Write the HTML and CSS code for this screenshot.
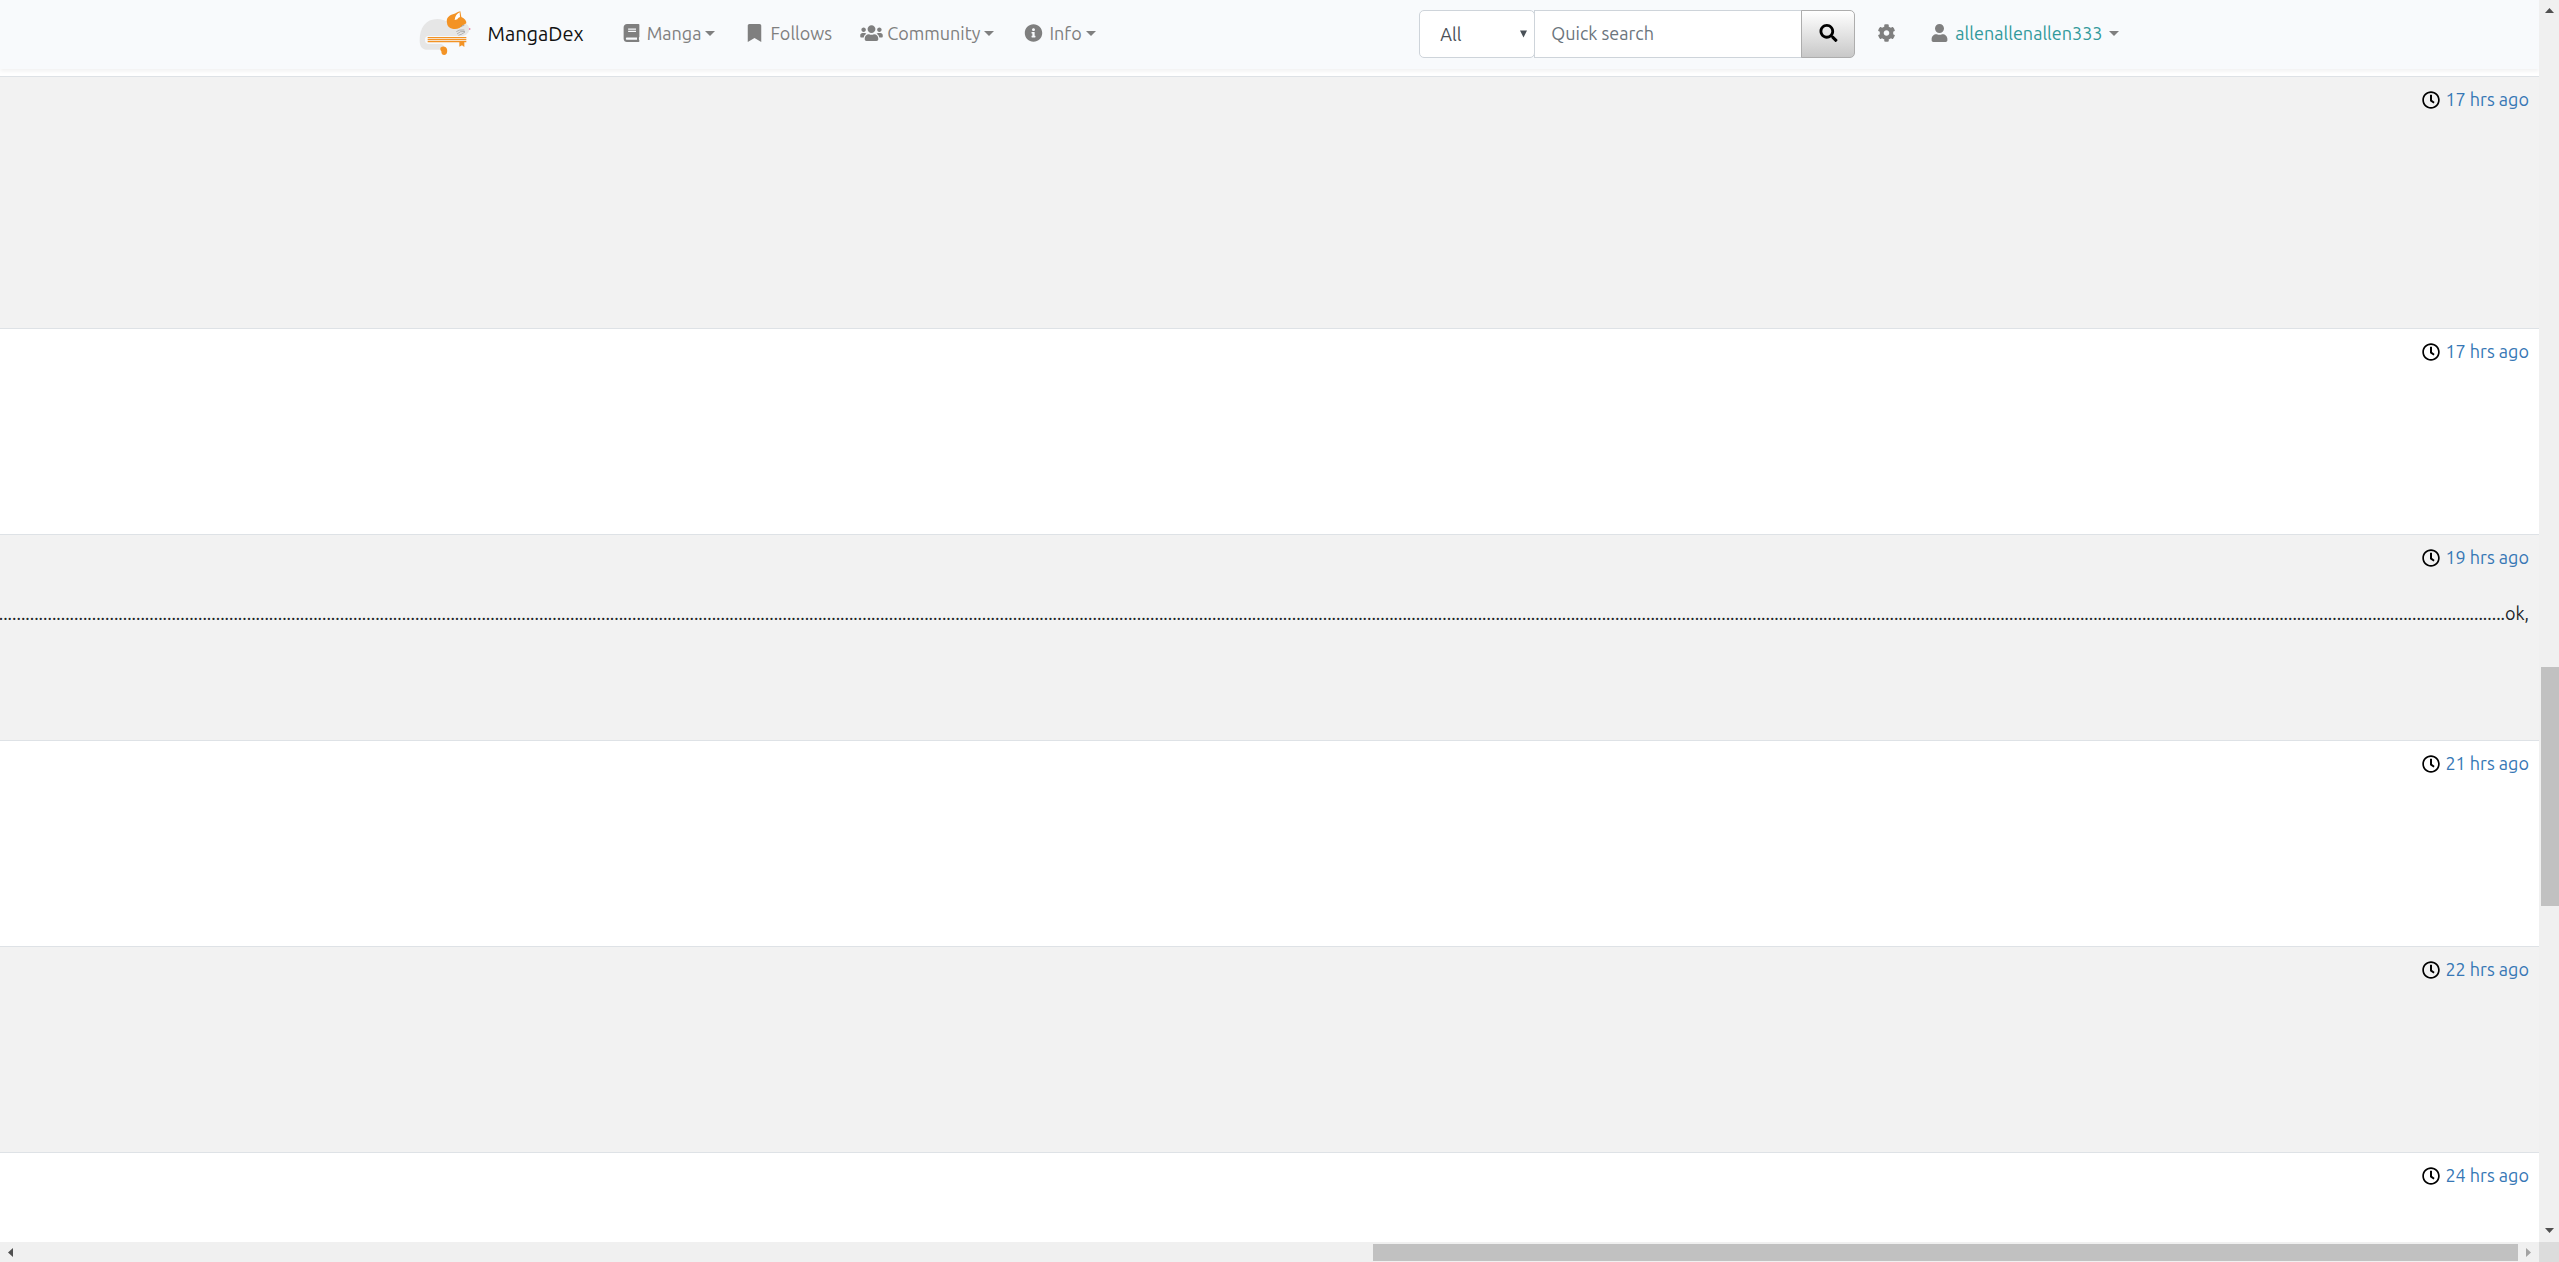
FILE: index.html
```html
<!DOCTYPE html>
<html lang="en">
<head>
  <meta charset="UTF-8">
  <meta name="viewport" content="width=device-width, initial-scale=1.0">
  <title>MangaDex</title>
  <link rel="stylesheet" href="styles.css">
</head>
<body>
  <div class="window">
    <div class="view">
      <!-- Top navigation -->
      <nav class="navbar">
        <div class="container">
          <a class="brand" href="#">
            <svg class="logo" viewBox="0 0 156 132" aria-hidden="true">
              <path fill="#e6e6e6" d="M20 116C7 114 2 104 2 88C2 50 20 24 55 24C68 24 78 28 88 34L130 34C144 38 151 46 151 54C151 64 143 72 133 75L28 76Q19 78 19 86Q19 96 28 98L64 98C76 101 78 108 72 116Z"/>
              <path fill="#f7f9fb" d="M26 75H142V98H26Q18 96 18 87Q18 77 26 75Z"/>
              <path fill="#f39325" d="M26 78H142V82H26ZM26 84H142V88H26ZM26 90H142V94H26ZM121 92H136V108L129 103L121 107Z"/>
              <path fill="#f39325" d="M64 110C72 104 82 106 84 115C86 124 83 132 76 132C69 132 67 128 67 121Q63 117 64 110Z"/>
              <path fill="#f39325" d="M84 36C81 23 88 14 102 10C112 7 116 2 124 1L127 18C137 22 143 29 142 37C138 38 136 42 131 43C125 52 112 56 100 53C91 51 84 45 84 36Z"/>
              <path fill="#fff" d="M107 27C108 15 114 8 122 4L123 18Q116 20 115 25Z"/>
              <path fill="none" stroke="#777" stroke-width="1.5" d="M112 62Q120 55 136 57M114 69Q122 60 138 61M118 73Q128 71 138 63M126 46L136 43"/>
              <circle cx="152" cy="54" r="2.5" fill="#e75a8c"/>
            </svg>
            MangaDex
          </a>
          <ul class="menu main-menu">
            <li>
              <a class="nav-link" href="#">
                <svg class="icon" viewBox="0 0 448 512" aria-hidden="true"><path d="M448 360V24c0-13.300-10.700-24-24-24H96C43 0 0 43 0 96v320c0 53 43 96 96 96h328c13.300 0 24-10.700 24-24v-16c0-7.500-3.500-14.300-8.900-18.700-4.200-15.400-4.200-59.300 0-74.700 5.400-4.300 8.900-11.100 8.900-18.600zM128 134c0-3.300 2.700-6 6-6h212c3.300 0 6 2.700 6 6v20c0 3.300-2.700 6-6 6H134c-3.300 0-6-2.700-6-6v-20zm0 64c0-3.300 2.700-6 6-6h212c3.300 0 6 2.700 6 6v20c0 3.300-2.700 6-6 6H134c-3.300 0-6-2.700-6-6v-20zm253.400 250H96c-17.700 0-32-14.300-32-32 0-17.600 14.400-32 32-32h285.400c-1.900 17.100-1.900 46.900 0 64z"/></svg>
                Manga
                <span class="caret"></span>
              </a>
            </li>
            <li>
              <a class="nav-link" href="#">
                <svg class="icon" viewBox="0 0 384 512" aria-hidden="true"><path d="M0 512V48C0 21.490 21.490 0 48 0h288c26.510 0 48 21.490 48 48v464L192 400 0 512z"/></svg>
                Follows
              </a>
            </li>
            <li>
              <a class="nav-link" href="#">
                <svg class="icon" viewBox="0 0 640 512" aria-hidden="true"><path d="M96 224c35.300 0 64-28.700 64-64s-28.700-64-64-64-64 28.700-64 64 28.700 64 64 64zm448 0c35.300 0 64-28.700 64-64s-28.700-64-64-64-64 28.700-64 64 28.700 64 64 64zm32 32h-64c-17.600 0-33.500 7.100-45.100 18.600 40.300 22.100 68.900 62 75.100 109.400h66c17.700 0 32-14.300 32-32v-32c0-35.300-28.700-64-64-64zm-256 0c61.900 0 112-50.100 112-112S381.900 32 320 32 208 82.100 208 144s50.100 112 112 112zm76.800 32h-8.300c-20.800 10-43.900 16-68.500 16s-47.600-6-68.500-16h-8.300C179.600 288 128 339.600 128 403.200V432c0 26.500 21.500 48 48 48h288c26.500 0 48-21.500 48-48v-28.800c0-63.600-51.600-115.200-115.200-115.200zm-223.700-13.400C161.500 263.100 145.600 256 128 256H64c-35.300 0-64 28.700-64 64v32c0 17.700 14.300 32 32 32h65.900c6.300-47.400 34.900-87.300 75.200-109.400z"/></svg>
                Community
                <span class="caret"></span>
              </a>
            </li>
            <li>
              <a class="nav-link" href="#">
                <svg class="icon" viewBox="0 0 512 512" aria-hidden="true"><path d="M256 8C119 8 8 119 8 256c0 137 111 248 248 248s248-111 248-248C504 119 393 8 256 8zm0 110c23.200 0 42 18.800 42 42s-18.800 42-42 42-42-18.800-42-42 18.800-42 42-42zm56 254c0 6.600-5.400 12-12 12h-88c-6.600 0-12-5.400-12-12v-24c0-6.600 5.400-12 12-12h12v-64h-12c-6.600 0-12-5.400-12-12v-24c0-6.600 5.400-12 12-12h64c6.600 0 12 5.400 12 12v100h12c6.600 0 12 5.400 12 12v24z"/></svg>
                Info
                <span class="caret"></span>
              </a>
            </li>
          </ul>

          <form class="search">
            <div class="select-wrap">
              <select class="search-type" aria-label="Search type">
                <option>All</option>
              </select>
              <svg class="select-arrow" viewBox="0 0 8 8" aria-hidden="true"><path d="M0 0H8L4 8Z"/></svg>
            </div>
            <input class="search-input" type="text" placeholder="Quick search" aria-label="Quick search">
            <button class="search-btn" type="submit" aria-label="Search">
              <svg class="icon" viewBox="0 0 512 512" aria-hidden="true"><path d="M505 442.700L405.300 343c-4.500-4.500-10.600-7-17-7H372c27.600-35.300 44-79.700 44-128C416 93.100 322.900 0 208 0S0 93.100 0 208s93.100 208 208 208c48.300 0 92.700-16.400 128-44v16.300c0 6.400 2.500 12.500 7 17l99.700 99.700c9.400 9.400 24.600 9.400 33.900 0l28.300-28.300c9.400-9.400 9.400-24.600.1-34zM208 336c-70.700 0-128-57.200-128-128 0-70.700 57.200-128 128-128 70.700 0 128 57.200 128 128 0 70.700-57.200 128-128 128z"/></svg>
            </button>
          </form>

          <ul class="menu user-menu">
            <li>
              <a class="nav-link" href="#" aria-label="Settings">
                <svg class="icon" viewBox="0 0 512 512" aria-hidden="true"><path d="M487.400 315.700l-42.600-24.600c4.300-23.200 4.300-47 0-70.200l42.600-24.600c4.900-2.800 7.100-8.600 5.500-14-11.100-35.600-30-67.800-54.700-94.600-3.800-4.100-10-5.100-14.800-2.300L380.800 110c-17.900-15.400-38.500-27.300-60.800-35.100V25.800c0-5.600-3.900-10.500-9.400-11.700-36.700-8.200-74.300-7.800-109.200 0-5.500 1.200-9.400 6.100-9.400 11.700V75c-22.200 7.900-42.800 19.800-60.800 35.100L88.700 85.500c-4.900-2.800-11-1.900-14.800 2.300-24.700 26.700-43.600 58.900-54.700 94.600-1.700 5.400.6 11.200 5.500 14L67.300 221c-4.300 23.200-4.300 47 0 70.200l-42.600 24.600c-4.900 2.800-7.100 8.600-5.500 14 11.100 35.600 30 67.800 54.700 94.600 3.800 4.100 10 5.100 14.800 2.300l42.600-24.600c17.900 15.400 38.500 27.300 60.800 35.100v49.200c0 5.600 3.900 10.500 9.400 11.700 36.700 8.200 74.300 7.800 109.200 0 5.500-1.200 9.400-6.100 9.400-11.700v-49.200c22.200-7.900 42.800-19.800 60.800-35.100l42.600 24.600c4.900 2.800 11 1.900 14.800-2.300 24.700-26.700 43.600-58.900 54.700-94.600 1.500-5.500-.7-11.300-5.600-14.100zM256 336c-44.100 0-80-35.900-80-80s35.900-80 80-80 80 35.900 80 80-35.900 80-80 80z"/></svg>
              </a>
            </li>
            <li>
              <a class="nav-link" href="#">
                <svg class="icon" viewBox="0 0 448 512" aria-hidden="true"><path d="M224 256c70.700 0 128-57.300 128-128S294.700 0 224 0 96 57.300 96 128s57.300 128 128 128zm89.600 32h-16.700c-22.200 10.200-46.900 16-72.900 16s-50.600-5.800-72.900-16h-16.700C60.200 288 0 348.200 0 422.400V464c0 26.500 21.500 48 48 48h352c26.500 0 48-21.500 48-48v-41.600c0-74.200-60.200-134.400-134.400-134.400z"/></svg>
                <span class="username">allenallenallen333</span>
                <span class="caret"></span>
              </a>
            </li>
          </ul>
        </div>
      </nav>

      <!-- Comments -->
      <main class="posts">
        <article class="post post-tall">
          <div class="post-time">
            <svg class="clock" viewBox="0 0 512 512" aria-hidden="true"><use href="#clock"/></svg>
            <a href="#">17 hrs ago</a>
          </div>
        </article>
        <article class="post">
          <div class="post-time">
            <svg class="clock" viewBox="0 0 512 512" aria-hidden="true"><use href="#clock"/></svg>
            <a href="#">17 hrs ago</a>
          </div>
        </article>
        <article class="post">
          <div class="post-time">
            <svg class="clock" viewBox="0 0 512 512" aria-hidden="true"><use href="#clock"/></svg>
            <a href="#">19 hrs ago</a>
          </div>
          <p class="post-body" id="longPost">ok,</p>
        </article>
        <article class="post">
          <div class="post-time">
            <svg class="clock" viewBox="0 0 512 512" aria-hidden="true"><use href="#clock"/></svg>
            <a href="#">21 hrs ago</a>
          </div>
        </article>
        <article class="post">
          <div class="post-time">
            <svg class="clock" viewBox="0 0 512 512" aria-hidden="true"><use href="#clock"/></svg>
            <a href="#">22 hrs ago</a>
          </div>
        </article>
        <article class="post">
          <div class="post-time">
            <svg class="clock" viewBox="0 0 512 512" aria-hidden="true"><use href="#clock"/></svg>
            <a href="#">24 hrs ago</a>
          </div>
        </article>
      </main>
    </div>

    <!-- Scrollbars -->
    <div class="scroll-y">
      <svg class="arrow" viewBox="0 0 20 20" aria-hidden="true"><path d="M6 13L10.500 8L15 13Z"/></svg>
      <div class="thumb"></div>
      <svg class="arrow arrow-end" viewBox="0 0 20 20" aria-hidden="true"><path d="M6 6L10.500 11L15 6Z"/></svg>
    </div>
    <div class="scroll-x">
      <svg class="arrow" viewBox="0 0 20 20" aria-hidden="true"><path d="M13 6L8 10.500L13 15Z"/></svg>
      <div class="thumb"></div>
      <svg class="arrow arrow-end arrow-off" viewBox="0 0 20 20" aria-hidden="true"><path d="M7 6L12 10.500L7 15Z"/></svg>
    </div>
    <div class="scroll-corner"></div>
  </div>

  <svg class="symbols" aria-hidden="true">
    <symbol id="clock" viewBox="0 0 512 512"><path d="M256 8C119 8 8 119 8 256s111 248 248 248 248-111 248-248S393 8 256 8zm0 448c-110.500 0-200-89.500-200-200S145.500 56 256 56s200 89.500 200 200-89.500 200-200 200zm61.800-104.400l-84.900-61.700c-3.100-2.300-4.900-5.900-4.900-9.700V116c0-6.600 5.400-12 12-12h32c6.600 0 12 5.400 12 12v141.700l66.800 48.600c5.400 3.900 6.500 11.400 2.600 16.800L334.600 349c-3.900 5.300-11.400 6.500-16.800 2.600z"/></symbol>
  </svg>

  <script>
    // One unbroken line of dots, it runs off the left edge
    const longPost = document.getElementById('longPost');
    longPost.textContent = '.'.repeat(640) + longPost.textContent;
  </script>
</body>
</html>
```

FILE: styles.css
```css
* {
  box-sizing: border-box;
}
body {
  margin: 0;
  font-family: Ubuntu, "Open Sans", sans-serif;
  font-size: 18px;
  line-height: 27px;
  color: #212529;
  background-color: #fff;
}
a {
  color: #3677b5;
  text-decoration: none;
}
.symbols {
  display: none;
}

/* Window: page view plus the two scrollbars */
.window {
  display: grid;
  grid-template-columns: minmax(0, 1fr) 20px;
  grid-template-rows: minmax(0, 1fr) 20px;
  height: 100vh;
}
.view {
  overflow: hidden;
}

/* Navbar */
.navbar {
  position: relative;
  padding: 10px 0 11px;
  background-color: #f8fafc;
  box-shadow: 0 2px 4px rgba(0, 0, 0, 0.06);
}
.container {
  display: flex;
  align-items: center;
  max-width: 1702px;
  margin: 0 auto;
  padding-right: 2px;
}
.brand {
  display: flex;
  align-items: center;
  gap: 17px;
  margin-right: 36px;
  font-size: 20px;
  color: #111;
}
.menu {
  display: flex;
  gap: 30px;
  margin: 0;
  padding: 0;
  list-style: none;
}
.main-menu {
  gap: 28px;
}
.brand,
.menu {
  margin-bottom: 2px;
}
.logo {
  width: 52px;
  height: 44px;
}
.nav-link {
  display: flex;
  align-items: center;
  gap: 4px;
  min-height: 27px;
  color: #7f7f7f;
}
.nav-link:hover {
  color: #4c4c4c;
}
.icon {
  width: 23px;
  height: 18px;
  fill: currentColor;
}
.username {
  color: #31999b;
}
.caret {
  border-top: 5px solid;
  border-left: 5px solid transparent;
  border-right: 5px solid transparent;
}
.username + .caret {
  margin-left: 2px;
}
.user-menu {
  margin-left: 20px;
}

/* Search box */
.search {
  display: flex;
  margin: 0 0 0 auto;
}
.select-wrap {
  position: relative;
}
.search-type,
.search-input,
.search-btn {
  height: 48px;
  margin: 0;
  font-family: inherit;
  font-size: 18px;
  border: 1px solid #ced4da;
}
.search-type {
  width: 116px;
  padding: 0 20px;
  color: #495057;
  background-color: #fff;
  border-radius: 5px;
  appearance: none;
}
.select-arrow {
  position: absolute;
  top: 20px;
  right: 8px;
  width: 7px;
  height: 8px;
  fill: #495057;
  pointer-events: none;
}
.search-input {
  width: 268px;
  margin-left: -1px;
  padding: 0 16px 2px;
  background-color: #fff;
  border-radius: 0;
}
.search-input::placeholder {
  color: #6c757d;
}
.search-btn {
  display: flex;
  align-items: center;
  justify-content: center;
  width: 54px;
  margin-left: -1px;
  padding: 0 0 2px;
  color: #000;
  background: linear-gradient(#fff, #c8c8c8);
  border-color: #adadad;
  border-radius: 0 5px 5px 0;
  cursor: pointer;
}

/* Posts */
.posts {
  padding-top: 7px;
}
.post {
  height: 206px;
  padding: 9px 10px;
  border-top: 1px solid #dee2e6;
}
.post:nth-child(odd) {
  background-color: #f2f2f2;
}
.post-tall {
  height: 252px;
}
.post-time {
  display: flex;
  align-items: center;
  justify-content: flex-end;
  gap: 5px;
}
.clock {
  width: 18px;
  height: 18px;
}
.post-body {
  display: flex;
  justify-content: flex-end;
  margin: 29px 0 0;
  white-space: nowrap;
}

/* Scrollbars */
.scroll-y,
.scroll-x {
  display: grid;
  background-color: #f0f0f0;
}
.scroll-y {
  grid-template-rows: 20px 647fr 239fr 316fr 20px;
  padding: 0 1px 0 0;
}
.scroll-x {
  grid-template-columns: 20px 1353fr 1145fr 1fr 20px;
}
.thumb {
  background-color: #c1c1c1;
}
.scroll-y .thumb {
  grid-row: 3;
  margin-left: 2px;
}
.scroll-x .thumb {
  grid-column: 3;
  margin: 2px 0 1px;
}
.arrow {
  width: 20px;
  height: 20px;
  fill: #505050;
}
.scroll-y .arrow-end {
  grid-row: 5;
}
.scroll-x .arrow-end {
  grid-column: 5;
}
.arrow-off {
  fill: #a3a3a3;
}
.scroll-corner {
  background-color: #dcdcdc;
}
```
